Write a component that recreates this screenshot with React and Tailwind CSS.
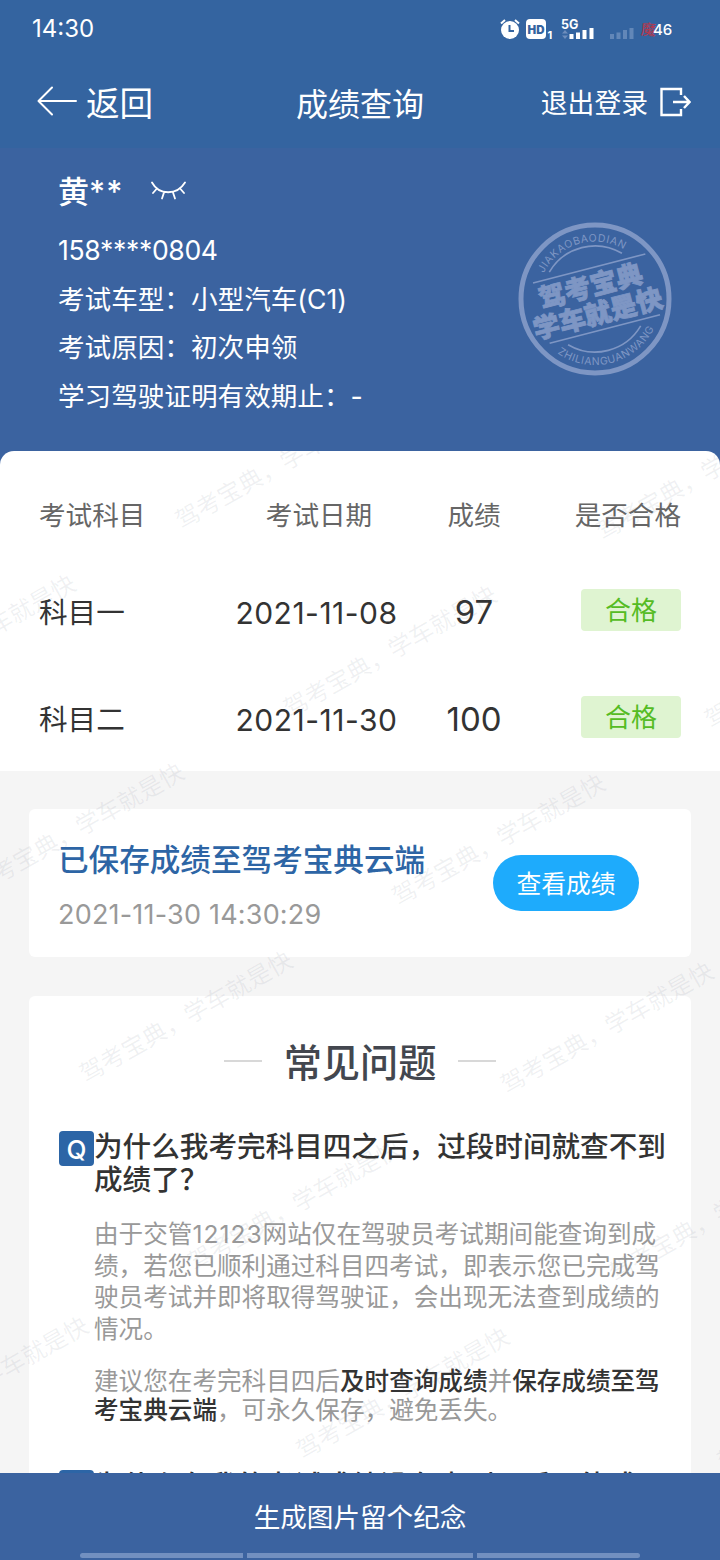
const results = [
  { subject: '科目一', date: '2021-11-08', score: 97 },
  { subject: '科目二', date: '2021-11-30', score: 100 },
]

const WATERMARK = '驾考宝典，学车就是快'

// staggered lattice, each row is shifted right and down from the one above
const marks = []
for (let row = -1; row <= 6; row++) {
  for (let col = -2; col <= 1; col++) {
    marks.push({ x: 184 + row * 108.4 + col * 421, y: 67 + row * 188.2 + col * 11 })
  }
}

function Watermarks() {
  return (
    <svg className="pointer-events-none absolute inset-0 h-full w-full" fill="#5a6478" fillOpacity="0.09" fontSize="24">
      {marks.map(m => (
        <text key={`${m.x}-${m.y}`} transform={`translate(${m.x} ${m.y}) rotate(-29.5)`} x="-8" y="9">{WATERMARK}</text>
      ))}
    </svg>
  )
}

function StatusBar() {
  return (
    <div className="flex h-[58px] items-center justify-between pr-12 pl-8 text-white">
      <span className="text-[24px] leading-none">14:30</span>
      <svg width="176" height="28" viewBox="496 14 176 28">
        <circle cx="510" cy="29" r="9" fill="#fff" />
        <path d="M501 22.500l4-3.500M519 22.500l-4-3.500" stroke="#fff" strokeWidth="2" />
        <path d="M509.500 24v6h4.500" stroke="#3464a0" strokeWidth="2" fill="none" />
        <rect x="526" y="18" width="20" height="20" rx="4" fill="#fff" />
        <text x="536" y="32.500" fontSize="11.500" fontWeight="900" textAnchor="middle" fill="#3464a0">HD</text>
        <text x="547.500" y="38" fontSize="11" fontWeight="700" fill="#fff">1</text>
        <text x="561" y="27.500" fontSize="12.500" fontWeight="700" fill="#fff">5G</text>
        <path d="M562 32.500l3-3.500 3 3.500zM562 34.500l3 3.500 3-3.500z" fill="#6d8dbc" />
        <path d="M571.500 38v-5M578 38v-6.500M584.500 38v-9M591.500 38v-11" stroke="#fff" strokeWidth="4" />
        <path d="M612 38v-5M618.500 38v-6.500M625 38v-9M631.500 38v-11" stroke="#6287b8" strokeWidth="4" />
        <text x="641" y="34" fontSize="15" fontWeight="500" fill="#b03a50" transform="rotate(4 648 28)">魔</text>
        <text x="653" y="33.500" fontSize="15" fontWeight="500" fill="#fff">46</text>
      </svg>
    </div>
  )
}

function NavBar() {
  return (
    <div className="grid h-[90px] grid-cols-[1fr_128px_1fr] items-center pr-[29px] pl-[37px] text-white">
      <div className="flex items-center gap-[9px]">
        <svg width="40" height="30" viewBox="0 0 40 30" fill="none" stroke="#fff" strokeWidth="2" strokeLinecap="round" strokeLinejoin="round" className="-mt-[4px]">
          <path d="M39 15H2M15 1.500L1.500 15L15 28.500" />
        </svg>
        <span className="pt-[2px] text-[33.600px] leading-none">返回</span>
      </div>
      <h1 className="relative -left-[4px] pt-[3px] text-center text-[32px] leading-none whitespace-nowrap">成绩查询</h1>
      <div className="flex items-center justify-end gap-[12px]">
        <span className="text-[26.800px] leading-none whitespace-nowrap">退出登录</span>
        <svg width="31" height="30" viewBox="0 0 31 30" fill="none" stroke="#fff" strokeWidth="2.400" className="-mt-[3px]">
          <path d="M21 8V2H1.500v26H21v-6M13 15h16M24 9l5.500 6-5.500 6" />
        </svg>
      </div>
    </div>
  )
}

function Stamp() {
  return (
    <svg width="154" height="154" viewBox="-77 -77 154 154" fill="none" stroke="#7e96c4" className="absolute top-[74px] left-[518px]">
      <circle r="74" strokeWidth="5" />
      <g transform="rotate(-14.500)">
        <path d="M-56 -31H60M-55 31.500H59" strokeWidth="1.600" />
        <path d="M-37.500 -37.500A53 53 0 0 1 37.500 -37.500M-37.500 37.500A53 53 0 0 0 37.500 37.500" strokeWidth="1.600" />
        <path id="arc-top" d="M-57.500 0A57.500 57.500 0 0 1 57.500 0" stroke="none" />
        <path id="arc-bottom" d="M-66 0A66 66 0 0 0 66 0" stroke="none" />
        <g fill="#7e96c4" stroke="none" textAnchor="middle">
          <text fontSize="10.500" letterSpacing="0.700"><textPath href="#arc-top" startOffset="49%">JIAKAOBAODIAN</textPath></text>
          <text fontSize="10.500" letterSpacing="0.600"><textPath href="#arc-bottom" startOffset="50%">ZHILIANGUANWANG</textPath></text>
          <g fontSize="26.500" fontWeight="900" stroke="#7e96c4" strokeWidth="0.800">
            <text x="-1" y="-4">驾考宝典</text>
            <text x="-1" y="24.500">学车就是快</text>
          </g>
        </g>
      </g>
    </svg>
  )
}

function Profile() {
  return (
    <div className="relative h-[303px] bg-[#3b63a0] pt-[21px] pl-[58px] text-white">
      <div className="flex h-[44px] items-center gap-[28px]">
        <span className="text-[31px] leading-none font-medium">黄<span className="tracking-[1px]">**</span></span>
        <svg width="35" height="20" viewBox="0 0 35 20" fill="none" stroke="#fff" strokeWidth="1.800" strokeLinecap="round">
          <path d="M1 1.500C8 14.500 26 14.500 34 1.500M5.500 8L2 12M13 11.500L11 17.500M22 11.500L24 17.500M29.500 8L33 12" />
        </svg>
      </div>
      <div className="mt-[13px] text-[26.600px] leading-[48.600px] whitespace-nowrap">
        <p className="tracking-[-0.350px]">158****0804</p>
        <p>考试车型：小型汽车(C1)</p>
        <p>考试原因：初次申领</p>
        <p>学习驾驶证明有效期止：-</p>
      </div>
      <Stamp />
    </div>
  )
}

function ScoreTable() {
  const cols = 'grid grid-cols-[160px_235px_80px_167px] items-center px-[39px]'
  return (
    <div className="h-[320px] rounded-t-[14px] bg-white pt-[12px] text-[#333]">
      <div className={`${cols} h-[104px] pt-[1px] text-[26.600px] text-[#666]`}>
        <span>考试科目</span>
        <span className="pl-[5px] text-center">考试日期</span>
        <span className="text-center">成绩</span>
        <span className="text-right">是否合格</span>
      </div>
      {results.map(r => (
        <div key={r.subject} className={`${cols} h-[107px] pb-[18px]`}>
          <span className="pt-[3px] text-[28.600px]">{r.subject}</span>
          <span className="pt-[3px] text-center text-[30px] tracking-[0.500px]">{r.date}</span>
          <span className="pt-[3px] text-center text-[33px]">{r.score}</span>
          <span className="-mt-[4px] flex h-[42px] w-[100px] items-center justify-center justify-self-end rounded-[4px] bg-[#dff4d1] pt-[2px] text-[26px] text-[#55bc24]">合格</span>
        </div>
      ))}
    </div>
  )
}

function SavedCard() {
  return (
    <div className="mx-[29px] mt-[38px] flex h-[148px] items-center justify-between rounded-md bg-white pr-[52px] pl-[29px]">
      <div className="pt-[8px]">
        <p className="text-[30.600px] leading-[44px] font-medium text-[#2d65a5]">已保存成绩至驾考宝典云端</p>
        <p className="mt-[11px] text-[27px] leading-[44px] tracking-[0.200px] text-[#999]">2021-11-30 14:30:29</p>
      </div>
      <button className="h-[56px] w-[146px] rounded-full bg-[#1eabfc] pt-[4px] text-[24.800px] text-white">查看成绩</button>
    </div>
  )
}

function QBadge() {
  return (
    <span className="flex h-[35px] w-[35px] shrink-0 items-center justify-center rounded-[4px] bg-[#2c65a6] pt-[3px] text-[26px] leading-none font-medium text-white">Q</span>
  )
}

function Faq() {
  return (
    <div className="mx-[29px] mt-[39px] h-[700px] rounded-md bg-white pt-[39px] pl-[30px]">
      <div className="flex items-center justify-center gap-[22px] pr-[30px]">
        <span className="-mt-[5px] h-[2px] w-[38px] bg-[#d8d8d8]" />
        <h2 className="text-[38.200px] leading-[56px] font-medium text-[#43474f]">常见问题</h2>
        <span className="-mt-[5px] h-[2px] w-[38px] bg-[#d8d8d8]" />
      </div>

      <div className="mt-[40px] flex whitespace-nowrap">
        <QBadge />
        <div>
          <h3 className="-mt-[1px] text-[28.600px] leading-[33px] font-medium text-[#333]">
            为什么我考完科目四之后，过段时间就查不到<br />成绩了？
          </h3>
          <p className="mt-[23px] text-[24.600px] leading-[31.500px] text-[#999]">
            由于交管<span className="tracking-[1px]">12123</span>网站仅在驾驶员考试期间能查询到成<br />
            绩，若您已顺利通过科目四考试，即表示您已完成驾<br />
            驶员考试并即将取得驾驶证，会出现无法查到成绩的<br />
            情况。
          </p>
          <p className="mt-[22px] text-[24.600px] leading-[29px] text-[#999]">
            建议您在考完科目四后<b className="font-medium text-[#333]">及时查询成绩</b>并<b className="font-medium text-[#333]">保存成绩至驾<br />考宝典云端</b>，可永久保存，避免丢失。
          </p>
        </div>
      </div>

      <div className="mt-[45px] flex whitespace-nowrap">
        <QBadge />
        <h3 className="-mt-[1px] text-[28.600px] leading-[33px] font-medium text-[#333]">为什么在我的考试成绩没有查到以后一能成</h3>
      </div>
    </div>
  )
}

export default function App() {
  return (
    <div className="flex h-[1560px] w-[720px] flex-col overflow-hidden bg-[#f5f5f5] font-[Inter,'Noto_Sans_CJK_SC',sans-serif]">
      <header className="shrink-0 bg-[#3464a0]">
        <StatusBar />
        <NavBar />
        <Profile />
      </header>

      <main className="relative min-h-0 flex-1 overflow-hidden bg-[linear-gradient(#3b63a0_20px,#f5f5f5_20px)]">
        <ScoreTable />
        <SavedCard />
        <Faq />
        <Watermarks />
      </main>

      <footer className="flex h-[87px] shrink-0 flex-col items-center justify-between bg-[#3b63a0] pt-[22px] pb-[2px] text-white">
        <button className="text-[26.600px] leading-[44px]">生成图片留个纪念</button>
        <div className="flex gap-1">
          <span className="h-[5px] w-[163px] rounded-l-full bg-[#7290c0]" />
          <span className="h-[5px] w-[226px] bg-[#7290c0]" />
          <span className="h-[5px] w-[163px] rounded-r-full bg-[#7290c0]" />
        </div>
      </footer>
    </div>
  )
}
